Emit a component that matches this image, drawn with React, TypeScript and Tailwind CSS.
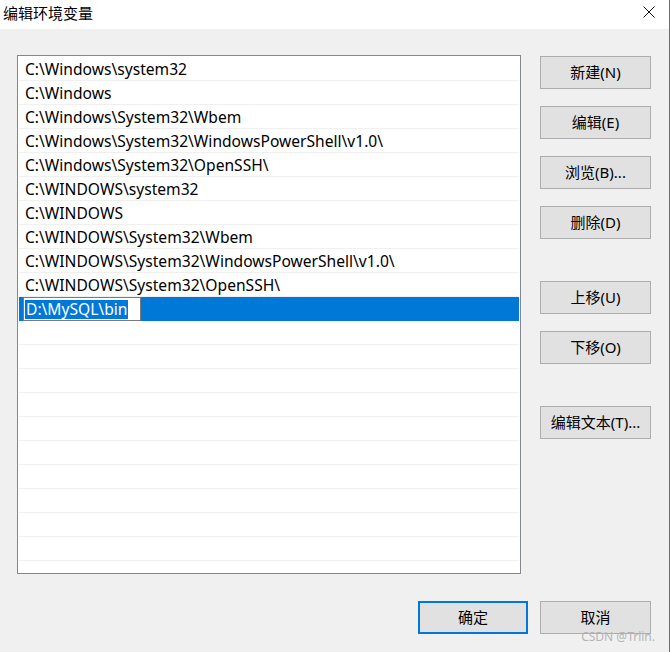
const paths = [
  'C:\\Windows\\system32',
  'C:\\Windows',
  'C:\\Windows\\System32\\Wbem',
  'C:\\Windows\\System32\\WindowsPowerShell\\v1.0\\',
  'C:\\Windows\\System32\\OpenSSH\\',
  'C:\\WINDOWS\\system32',
  'C:\\WINDOWS',
  'C:\\WINDOWS\\System32\\Wbem',
  'C:\\WINDOWS\\System32\\WindowsPowerShell\\v1.0\\',
  'C:\\WINDOWS\\System32\\OpenSSH\\',
]

const font = { fontFamily: "'Noto Sans', 'Noto Sans CJK SC', sans-serif" }

function Btn({ label, primary, className = '' }: { label: string; primary?: boolean; className?: string }) {
  return (
    <button
      className={`h-[33px] bg-[#e1e1e1] text-[15px] text-black leading-none ${
        primary ? 'border-2 border-[#0078d7]' : 'border border-[#adadad]'
      } ${className}`}
    >
      {label}
    </button>
  )
}

export default function App() {
  const empty = Array.from({ length: 11 })
  return (
    <div
      className="w-[670px] h-[652px] bg-[#f0f0f0] border-r border-[#6e6e6e] flex flex-col overflow-hidden relative"
      style={font}
    >
      <div className="h-[29px] bg-white flex items-center justify-between pl-[3px] pr-[14px] pb-[3px]">
        <span className="text-[15px] text-black">编辑环境变量</span>
        <svg width="12" height="12" viewBox="0 0 12 12" className="mt-[-3px]">
          <path d="M0.5 0.5 L11.5 11.5 M11.5 0.5 L0.5 11.5" stroke="#111" strokeWidth="1" />
        </svg>
      </div>

      <div className="flex pl-[17px] pt-[26px]">
        <div className="w-[504px] h-[519px] bg-white border border-[#828790] pt-px px-px">
          {paths.map((p) => (
            <div
              key={p}
              className="h-[24px] border-b border-[#f0f0f0] flex items-center pl-[6px] pt-[3px] text-[15.6px] text-black whitespace-nowrap"
            >
              {p}
            </div>
          ))}
          <div className="h-[24px] bg-[#0078d7] flex items-stretch pl-[4px]">
            <div className="w-[118px] bg-white border border-[#7a7a7a] flex items-center pl-[1px] pt-px">
              <span className="bg-[#0078d7] text-white text-[15.6px] leading-[19px] px-px">D:\MySQL\bin</span>
            </div>
          </div>
          {empty.map((_, i) => (
            <div key={i} className="h-[24px] border-b border-[#f0f0f0]" />
          ))}
        </div>

        <div className="ml-[19px] pt-px flex flex-col w-[111px]">
          <Btn label="新建(N)" />
          <Btn label="编辑(E)" className="mt-[17px]" />
          <Btn label="浏览(B)..." className="mt-[17px]" />
          <Btn label="删除(D)" className="mt-[17px]" />
          <Btn label="上移(U)" className="mt-[42px]" />
          <Btn label="下移(O)" className="mt-[17px]" />
          <Btn label="编辑文本(T)..." className="mt-[42px]" />
        </div>
      </div>

      <div className="flex justify-end pr-[18px] mt-[27px] gap-[12px]">
        <Btn label="确定" primary className="w-[110px] h-[32px]" />
        <Btn label="取消" className="w-[111px] h-[32px]" />
      </div>

      <span className="absolute right-[14px] bottom-[6px] text-[12px] text-[#b4b4b4]">CSDN @Trlin.</span>
    </div>
  )
}
